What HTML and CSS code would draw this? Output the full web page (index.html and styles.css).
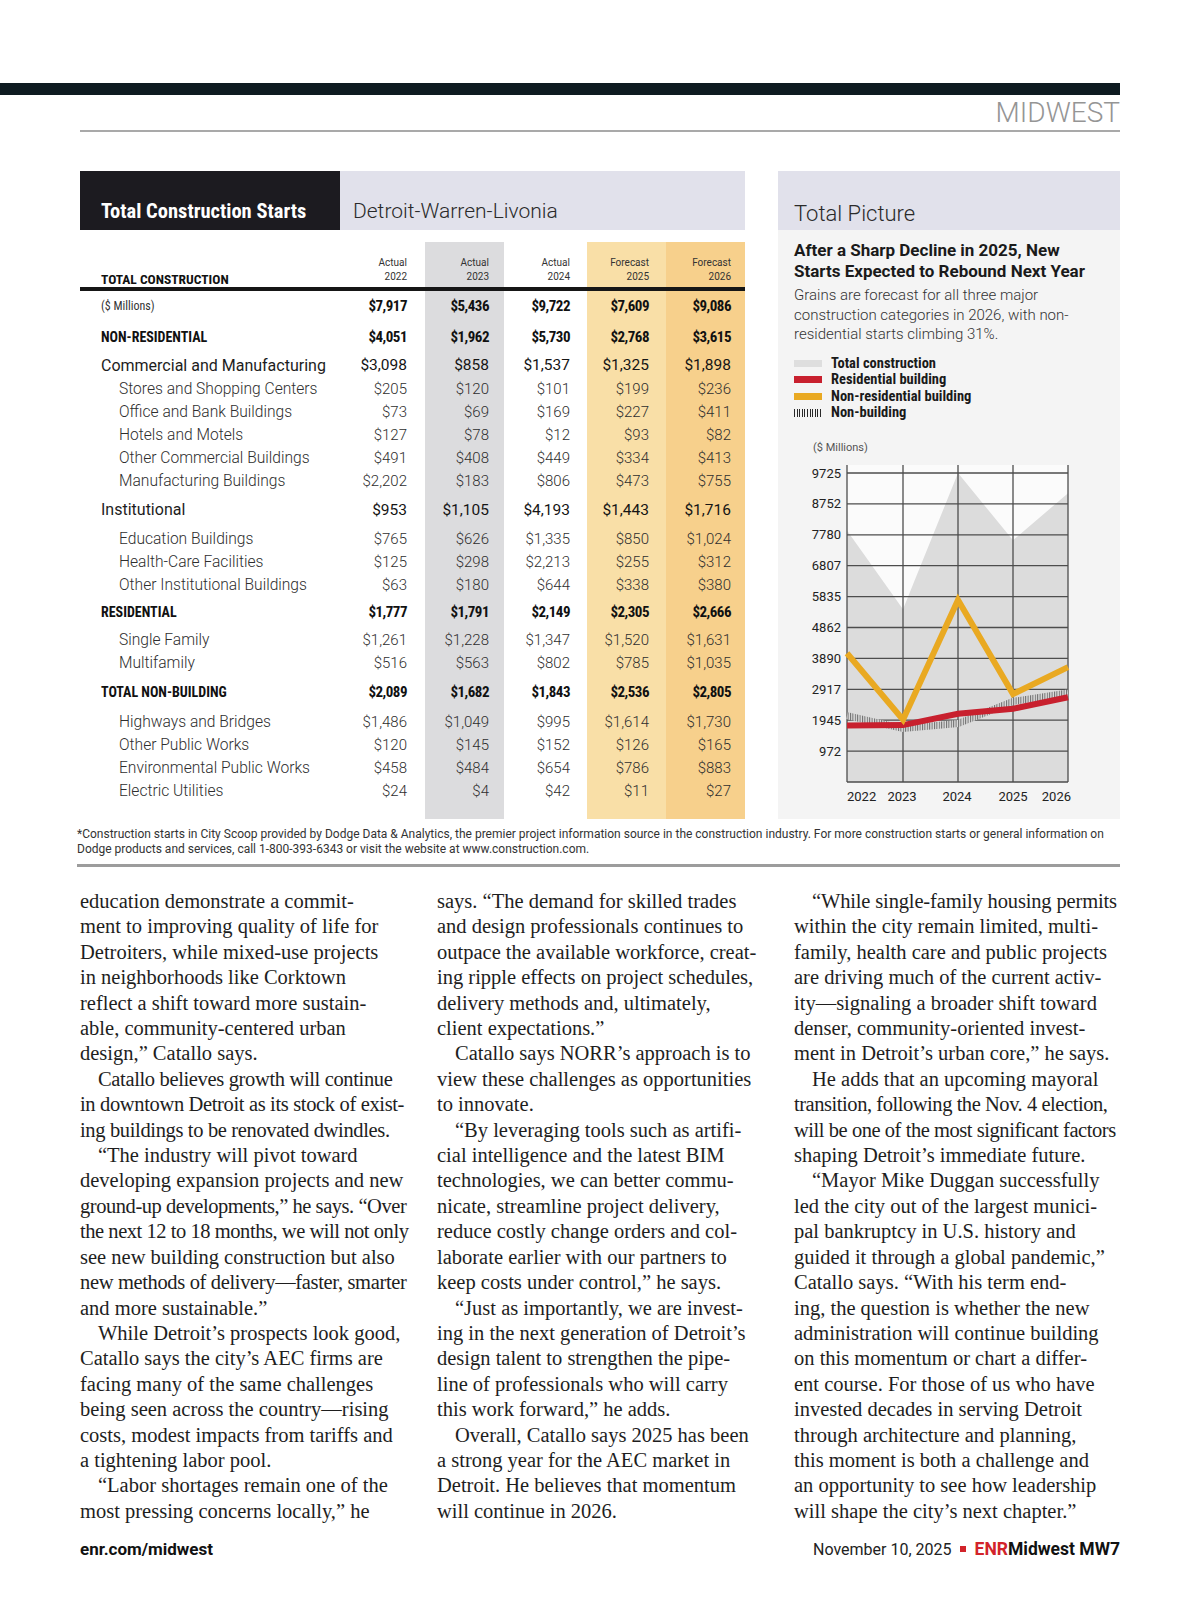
FILE: index.html
```html
<!DOCTYPE html>
<html lang="en">
<head>
<meta charset="utf-8">
<title>ENR Midwest – Detroit</title>
<link rel="stylesheet" href="styles.css">
</head>
<body>
<div class="page">
  <div class="topbar"></div>
  <div class="section-head">MIDWEST</div>

  <div class="charts">
    <div class="starts">
      <div class="starts-head">
        <div class="starts-title">Total Construction Starts</div>
        <div class="starts-metro">Detroit-Warren-Livonia</div>
      </div>
      <table class="starts-table">
        <thead>
          <tr class="row-head">
            <th class="lbl">TOTAL CONSTRUCTION</th>
            <th class="c22">Actual<br>2022</th>
            <th class="c23">Actual<br>2023</th>
            <th class="c24">Actual<br>2024</th>
            <th class="c25">Forecast<br>2025</th>
            <th class="c26">Forecast<br>2026</th>
          </tr>
          <tr class="row-rule"><td colspan="6"></td></tr>
        </thead>
        <tbody>
          <tr class="row-total"><td class="lbl">($ Millions)</td><td class="c22">$7,917</td><td class="c23">$5,436</td><td class="c24">$9,722</td><td class="c25">$7,609</td><td class="c26">$9,086</td></tr>
          <tr class="row-group r32"><td class="lbl">NON-RESIDENTIAL</td><td class="c22">$4,051</td><td class="c23">$1,962</td><td class="c24">$5,730</td><td class="c25">$2,768</td><td class="c26">$3,615</td></tr>
          <tr class="row-cat r24"><td class="lbl">Commercial and Manufacturing</td><td class="c22">$3,098</td><td class="c23">$858</td><td class="c24">$1,537</td><td class="c25">$1,325</td><td class="c26">$1,898</td></tr>
          <tr class="row-sub"><td class="lbl">Stores and Shopping Centers</td><td class="c22">$205</td><td class="c23">$120</td><td class="c24">$101</td><td class="c25">$199</td><td class="c26">$236</td></tr>
          <tr class="row-sub"><td class="lbl">Office and Bank Buildings</td><td class="c22">$73</td><td class="c23">$69</td><td class="c24">$169</td><td class="c25">$227</td><td class="c26">$411</td></tr>
          <tr class="row-sub"><td class="lbl">Hotels and Motels</td><td class="c22">$127</td><td class="c23">$78</td><td class="c24">$12</td><td class="c25">$93</td><td class="c26">$82</td></tr>
          <tr class="row-sub"><td class="lbl">Other Commercial Buildings</td><td class="c22">$491</td><td class="c23">$408</td><td class="c24">$449</td><td class="c25">$334</td><td class="c26">$413</td></tr>
          <tr class="row-sub"><td class="lbl">Manufacturing Buildings</td><td class="c22">$2,202</td><td class="c23">$183</td><td class="c24">$806</td><td class="c25">$473</td><td class="c26">$755</td></tr>
          <tr class="row-cat r35"><td class="lbl">Institutional</td><td class="c22">$953</td><td class="c23">$1,105</td><td class="c24">$4,193</td><td class="c25">$1,443</td><td class="c26">$1,716</td></tr>
          <tr class="row-sub"><td class="lbl">Education Buildings</td><td class="c22">$765</td><td class="c23">$626</td><td class="c24">$1,335</td><td class="c25">$850</td><td class="c26">$1,024</td></tr>
          <tr class="row-sub"><td class="lbl">Health-Care Facilities</td><td class="c22">$125</td><td class="c23">$298</td><td class="c24">$2,213</td><td class="c25">$255</td><td class="c26">$312</td></tr>
          <tr class="row-sub"><td class="lbl">Other Institutional Buildings</td><td class="c22">$63</td><td class="c23">$180</td><td class="c24">$644</td><td class="c25">$338</td><td class="c26">$380</td></tr>
          <tr class="row-group r32"><td class="lbl">RESIDENTIAL</td><td class="c22">$1,777</td><td class="c23">$1,791</td><td class="c24">$2,149</td><td class="c25">$2,305</td><td class="c26">$2,666</td></tr>
          <tr class="row-sub"><td class="lbl">Single Family</td><td class="c22">$1,261</td><td class="c23">$1,228</td><td class="c24">$1,347</td><td class="c25">$1,520</td><td class="c26">$1,631</td></tr>
          <tr class="row-sub"><td class="lbl">Multifamily</td><td class="c22">$516</td><td class="c23">$563</td><td class="c24">$802</td><td class="c25">$785</td><td class="c26">$1,035</td></tr>
          <tr class="row-group r36"><td class="lbl">TOTAL NON-BUILDING</td><td class="c22">$2,089</td><td class="c23">$1,682</td><td class="c24">$1,843</td><td class="c25">$2,536</td><td class="c26">$2,805</td></tr>
          <tr class="row-sub"><td class="lbl">Highways and Bridges</td><td class="c22">$1,486</td><td class="c23">$1,049</td><td class="c24">$995</td><td class="c25">$1,614</td><td class="c26">$1,730</td></tr>
          <tr class="row-sub"><td class="lbl">Other Public Works</td><td class="c22">$120</td><td class="c23">$145</td><td class="c24">$152</td><td class="c25">$126</td><td class="c26">$165</td></tr>
          <tr class="row-sub"><td class="lbl">Environmental Public Works</td><td class="c22">$458</td><td class="c23">$484</td><td class="c24">$654</td><td class="c25">$786</td><td class="c26">$883</td></tr>
          <tr class="row-sub"><td class="lbl">Electric Utilities</td><td class="c22">$24</td><td class="c23">$4</td><td class="c24">$42</td><td class="c25">$11</td><td class="c26">$27</td></tr>
          <tr class="row-end"><td class="lbl"></td><td class="c22"></td><td class="c23"></td><td class="c24"></td><td class="c25"></td><td class="c26"></td></tr>
        </tbody>
      </table>
    </div>

    <div class="picture">
      <div class="picture-head">Total Picture</div>
      <div class="picture-body">
        <h2 class="picture-title">After a Sharp Decline in 2025, New<br>Starts Expected to Rebound Next Year</h2>
        <p class="picture-text">Grains are forecast for all three major<br>construction categories in 2026, with non-<br>residential starts climbing 31%.</p>
        <ul class="legend">
          <li><span class="sw sw-total"></span>Total construction</li>
          <li><span class="sw sw-res"></span>Residential building</li>
          <li><span class="sw sw-nonres"></span>Non-residential building</li>
          <li><span class="sw sw-nb"></span>Non-building</li>
        </ul>
      </div>
      <svg class="chart" width="342" height="380" viewBox="0 0 342 380" xmlns="http://www.w3.org/2000/svg">
        <defs>
          <pattern id="hatch" width="2.4" height="10" patternUnits="userSpaceOnUse">
            <rect width="2.4" height="10" fill="#dedede"/>
            <rect width="1" height="10" fill="#6a6a6a"/>
          </pattern>
        </defs>
        <text x="35" y="21" class="ch-unit">($ Millions)</text>
        <rect x="69" y="35" width="221" height="317" fill="#fbfbfb"/>
        <polygon points="69,100.45 125,179.28 180,43.1 235,110.23 290,63.3 290,352 69,352" fill="#dcdcdc"/>
        <g stroke="#4d4d4d" stroke-width="1.3">
          <line x1="69" y1="43" x2="290" y2="43"/>
          <line x1="69" y1="73.9" x2="290" y2="73.9"/>
          <line x1="69" y1="104.8" x2="290" y2="104.8"/>
          <line x1="69" y1="135.7" x2="290" y2="135.7"/>
          <line x1="69" y1="166.6" x2="290" y2="166.6"/>
          <line x1="69" y1="197.5" x2="290" y2="197.5"/>
          <line x1="69" y1="228.4" x2="290" y2="228.4"/>
          <line x1="69" y1="259.3" x2="290" y2="259.3"/>
          <line x1="69" y1="290.2" x2="290" y2="290.2"/>
          <line x1="69" y1="321.1" x2="290" y2="321.1"/>
          <line x1="69" y1="352" x2="290" y2="352"/>
          <line x1="69" y1="35" x2="69" y2="352"/>
          <line x1="125" y1="35" x2="125" y2="352"/>
          <line x1="180" y1="35" x2="180" y2="352"/>
          <line x1="235" y1="35" x2="235" y2="352"/>
          <line x1="290" y1="35" x2="290" y2="352"/>
        </g>
        <g class="ch-y" text-anchor="end">
          <text x="63" y="47.5">9725</text>
          <text x="63" y="78.4">8752</text>
          <text x="63" y="109.3">7780</text>
          <text x="63" y="140.2">6807</text>
          <text x="63" y="171.1">5835</text>
          <text x="63" y="202">4862</text>
          <text x="63" y="232.9">3890</text>
          <text x="63" y="263.8">2917</text>
          <text x="63" y="294.7">1945</text>
          <text x="63" y="325.6">972</text>
        </g>
        <polyline points="69,285.62 125,298.56 180,293.44 235,271.42 290,262.87" fill="none" stroke="url(#hatch)" stroke-width="7"/>
        <polyline points="69,295.54 125,295.09 180,283.72 235,278.76 290,267.29" fill="none" stroke="#c8202e" stroke-width="6"/>
        <polyline points="69,223.28 125,289.66 180,169.94 235,264.05 290,237.14" fill="none" stroke="#e9a922" stroke-width="6" stroke-linejoin="miter"/>
        <g class="ch-x">
          <text x="69" y="370.5" text-anchor="start">2022</text>
          <text x="124" y="370.5" text-anchor="middle">2023</text>
          <text x="179" y="370.5" text-anchor="middle">2024</text>
          <text x="235" y="370.5" text-anchor="middle">2025</text>
          <text x="293" y="370.5" text-anchor="end">2026</text>
        </g>
      </svg>
    </div>
  </div>

  <p class="footnote">*Construction starts in City Scoop provided by Dodge Data &amp; Analytics, the premier project information source in the construction industry. For more construction starts or general information on<br>Dodge products and services, call 1-800-393-6343 or visit the website at www.construction.com.</p>

  <div class="article">
    <div class="col">
      <p>education demonstrate a commit-<br>ment to improving quality of life for<br>Detroiters, while mixed-use projects<br>in neighborhoods like Corktown<br>reflect a shift toward more sustain-<br>able, community-centered urban<br>design,” Catallo says.</p>
      <p class="ind"><span class="tight1">Catallo believes growth will continue</span><br><span class="tight1">in downtown Detroit as its stock of exist-</span><br><span class="tight1">ing buildings to be renovated dwindles.</span></p>
      <p class="ind">“The industry will pivot toward<br>developing expansion projects and new<br><span class="tight2">ground-up developments,” he says. “Over</span><br><span class="tight2">the next 12 to 18 months, we will not only</span><br>see new building construction but also<br><span class="tight1">new methods of delivery—faster, smarter</span><br>and more sustainable.”</p>
      <p class="ind">While Detroit’s prospects look good,<br>Catallo says the city’s AEC firms are<br>facing many of the same challenges<br>being seen across the country—rising<br>costs, modest impacts from tariffs and<br>a tightening labor pool.</p>
      <p class="ind">“Labor shortages remain one of the<br>most pressing concerns locally,” he</p>
    </div>
    <div class="col">
      <p>says. “The demand for skilled trades<br>and design professionals continues to<br>outpace the available workforce, creat-<br>ing ripple effects on project schedules,<br>delivery methods and, ultimately,<br>client expectations.”</p>
      <p class="ind">Catallo says NORR’s approach is to<br>view these challenges as opportunities<br>to innovate.</p>
      <p class="ind">“By leveraging tools such as artifi-<br>cial intelligence and the latest BIM<br>technologies, we can better commu-<br>nicate, streamline project delivery,<br>reduce costly change orders and col-<br>laborate earlier with our partners to<br>keep costs under control,” he says.</p>
      <p class="ind">“Just as importantly, we are invest-<br>ing in the next generation of Detroit’s<br>design talent to strengthen the pipe-<br>line of professionals who will carry<br>this work forward,” he adds.</p>
      <p class="ind">Overall, Catallo says 2025 has been<br>a strong year for the AEC market in<br>Detroit. He believes that momentum<br>will continue in 2026.</p>
    </div>
    <div class="col">
      <p class="ind"><span class="tight0">“While single-family housing permits</span><br>within the city remain limited, multi-<br>family, health care and public projects<br>are driving much of the current activ-<br>ity—signaling a broader shift toward<br>denser, community-oriented invest-<br>ment in Detroit’s urban core,” he says.</p>
      <p class="ind">He adds that an upcoming mayoral<br><span class="tight2">transition, following the Nov. 4 election,</span><br><span class="tight2">will be one of the most significant factors</span><br>shaping Detroit’s immediate future.</p>
      <p class="ind">“Mayor Mike Duggan successfully<br>led the city out of the largest munici-<br>pal bankruptcy in U.S. history and<br>guided it through a global pandemic,”<br>Catallo says. “With his term end-<br>ing, the question is whether the new<br>administration will continue building<br>on this momentum or chart a differ-<br>ent course. For those of us who have<br>invested decades in serving Detroit<br>through architecture and planning,<br>this moment is both a challenge and<br>an opportunity to see how leadership<br>will shape the city’s next chapter.”</p>
    </div>
  </div>

  <footer class="foot">
    <span class="foot-url">enr.com/midwest</span>
    <span class="foot-right"><span class="foot-date">November 10, 2025</span><span class="foot-sq"></span><span class="foot-brand"><span class="enr">ENR</span>Midwest MW7</span></span>
  </footer>
</div>
</body>
</html>
```

FILE: styles.css
```css
* { box-sizing: border-box; }
html, body { margin: 0; padding: 0; background: #fff; }
body { font-family: Roboto, "Liberation Sans", sans-serif; color: #222; }

.page { width: 1200px; height: 1600px; padding-top: 83px; }

.topbar { width: 1120px; height: 12px; background: #0e1b21; }

.section-head {
  margin: 0 80px;
  height: 37px;
  border-bottom: 2px solid #a9a9a9;
  text-align: right;
  font-size: 28px;
  font-weight: 300;
  line-height: 35px;
  color: #959595;
}

.charts { display: flex; gap: 33px; margin: 39px 80px 0; align-items: stretch; }

/* ---------- starts table ---------- */
.starts { width: 665px; }
.starts-head { display: flex; height: 59px; }
.starts-title {
  width: 260px; background: #1c1b20; color: #fff;
  font-family: "Liberation Sans Narrow", "Roboto", sans-serif; font-stretch: condensed;
  font-weight: 700; font-size: 20.5px; line-height: 26px;
  padding: 27px 0 0 21px;
}
.starts-metro {
  flex: 1; background: #e1e1eb; color: #2a2a2a;
  font-weight: 300; font-size: 21px; line-height: 26px;
  padding: 27px 0 0 13px;
}

.starts-table {
  width: 665px; margin-top: 12px;
  border-collapse: collapse; table-layout: fixed;
}
.starts-table th, .starts-table td { padding: 0; text-align: right; white-space: nowrap; }
.starts-table .lbl { width: 265px; text-align: left; padding-left: 21px; }
.starts-table .c22 { width: 80px; padding-right: 18px; }
.starts-table .c23 { width: 79px; padding-right: 15px; background: #dcdcde; }
.starts-table .c24 { width: 83px; padding-right: 17px; }
.starts-table .c25 { width: 79px; padding-right: 17px; background: #f9dfa7; }
.starts-table .c26 { width: 79px; padding-right: 14px; background: #f7d08c; }

.row-head th {
  height: 45px; vertical-align: bottom;
  font-size: 10px; font-weight: 400; line-height: 14px; color: #333;
  padding-bottom: 3px;
}
.row-head th.lbl {
  font-family: "Liberation Sans Narrow", "Roboto", sans-serif; font-stretch: condensed;
  font-weight: 700; font-size: 13.5px; color: #111; line-height: 16px; padding-bottom: 0;
}
.row-rule td { height: 4px; background: #161616; }

.row-total td {
  height: 30px;
  font-family: "Liberation Sans Narrow", "Roboto", sans-serif; font-stretch: condensed;
  font-weight: 700; font-size: 15px; letter-spacing: -0.5px; color: #111;
}
.row-total td.lbl { font-family: Roboto, sans-serif; font-weight: 400; font-size: 12px; letter-spacing: 0; color: #333; }

.row-group td {
  font-family: "Liberation Sans Narrow", "Roboto", sans-serif; font-stretch: condensed;
  font-weight: 700; font-size: 15px; letter-spacing: -0.5px; color: #111;
}
.row-group td.lbl { font-size: 14px; letter-spacing: 0; }
.r32 td { height: 32px; }
.r36 td { height: 36px; }
.r24 td { height: 24px; }
.r35 td { height: 35px; }

.row-cat td { font-size: 15.5px; color: #151515; }
.row-cat td.lbl { font-size: 16px; color: #1d1d1d; }

.row-sub td { height: 23px; font-size: 15px; font-weight: 300; color: #2e2e2e; }
.row-sub td.lbl { padding-left: 39px; font-size: 15.6px; }
.row-end td { height: 17px; }

/* ---------- total picture ---------- */
.picture { width: 342px; background: #f4f4f4; }
.picture-head {
  height: 59px; background: #e1e1eb; color: #2a2a2a;
  font-size: 22px; font-weight: 300; line-height: 26px;
  padding: 30px 0 0 16px;
}
.picture-body { padding: 10px 0 0 16px; }
.picture-title {
  margin: 0; font-size: 17px; font-weight: 700; line-height: 21px; color: #1a1a1a;
}
.picture-text {
  margin: 4px 0 0; font-size: 15px; font-weight: 300; line-height: 19.5px; color: #333;
}
.legend { list-style: none; margin: 11px 0 0; padding: 0; }
.legend li {
  display: flex; align-items: center; height: 16.3px;
  font-family: "Liberation Sans Narrow", "Roboto", sans-serif; font-stretch: condensed;
  font-weight: 700; font-size: 14.5px; color: #1a1a1a;
}
.sw { width: 28px; height: 7px; margin-right: 9px; flex: none; }
.sw-total { background: #dedede; }
.sw-res { background: #c8202e; }
.sw-nonres { background: #e9a922; }
.sw-nb { background: repeating-linear-gradient(90deg, #2a2a2a 0 1px, transparent 1px 2.6px); height: 8px; }

.chart { display: block; margin-top: 9px; }
.ch-unit { font-family: Roboto, sans-serif; font-size: 11px; fill: #555; }
.ch-y text, .ch-x text { font-family: Roboto, sans-serif; font-size: 13px; fill: #222; }

/* ---------- footnote ---------- */
.footnote {
  margin: 8px 80px 0 77px; padding-bottom: 7px;
  border-bottom: 3px solid #9c9c9c;
  font-size: 12px; line-height: 15px; color: #333; white-space: nowrap;
}

/* ---------- article ---------- */
.article {
  display: grid; grid-template-columns: repeat(3, 326px); column-gap: 31px;
  margin: 22px 80px 0;
  font-family: "Liberation Serif", serif; font-size: 20.5px; line-height: 25.4px; color: #1e1e1e;
}
.col p { margin: 0; white-space: nowrap; }
.col p.ind { text-indent: 18px; }
.tight0 { letter-spacing: -0.15px; }
.tight1 { letter-spacing: -0.35px; }
.tight2 { letter-spacing: -0.45px; }

/* ---------- footer ---------- */
.foot {
  display: flex; justify-content: space-between; align-items: center;
  margin: 5px 80px 0;
  height: 40px;
}
.foot-url { font-weight: 700; font-size: 17px; color: #111; }
.foot-right { display: flex; align-items: center; }
.foot-date { font-size: 16px; color: #222; }
.foot-sq { width: 6px; height: 6px; background: #d2232a; margin: 0 9px 0 8px; }
.foot-brand { font-weight: 700; font-size: 17.5px; color: #111; }
.enr { color: #d2232a; }
```
